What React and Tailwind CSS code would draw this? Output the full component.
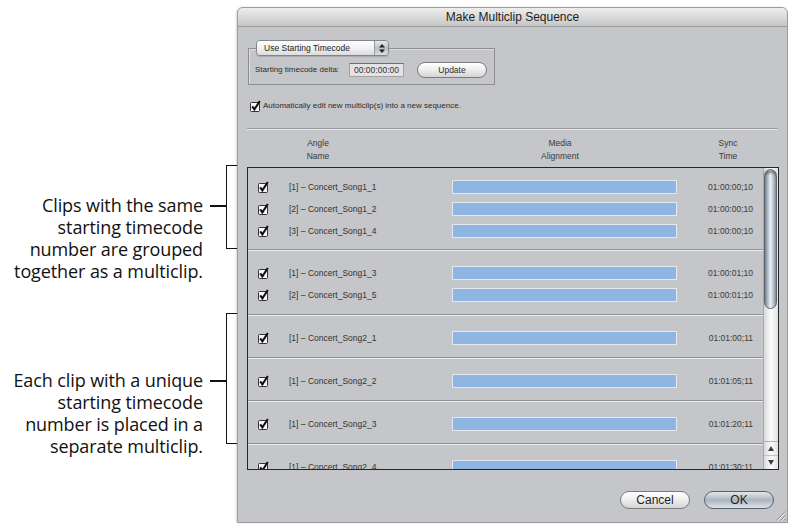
import React from "react";

const groups = [
  [
    ["[1] – Concert_Song1_1", "01:00:00;10"],
    ["[2] – Concert_Song1_2", "01:00:00;10"],
    ["[3] – Concert_Song1_4", "01:00:00;10"],
  ],
  [
    ["[1] – Concert_Song1_3", "01:00:01;10"],
    ["[2] – Concert_Song1_5", "01:00:01;10"],
  ],
  [["[1] – Concert_Song2_1", "01:01:00;11"]],
  [["[1] – Concert_Song2_2", "01:01:05;11"]],
  [["[1] – Concert_Song2_3", "01:01:20;11"]],
  [["[1] – Concert_Song2_4", "01:01:30;11"]],
];

function Check() {
  return (
    <svg width="11" height="12" viewBox="0 0 11 12" className="block shrink-0">
      <rect x="0.5" y="2.5" width="9" height="9" rx="1" fill="#f7f7f7" stroke="#333" />
      <path d="M2.2 6.3 L4.4 9.4 L9.8 1" fill="none" stroke="#0d0d0d" strokeWidth="2" />
    </svg>
  );
}

function Note({ lines, bracket, textTop, dashTop, className = "" }) {
  return (
    <div className={`flex items-start ${className}`} style={{ height: bracket }}>
      <div
        className="w-[203px] text-right font-['Open_Sans',sans-serif] text-[18px] leading-[22px] tracking-[-0.1px] text-[#111]"
        style={{ marginTop: textTop }}
      >
        {lines.map((l, i) => (
          <div key={i} className="whitespace-nowrap">{l}</div>
        ))}
      </div>
      <div className="ml-[7px] w-[16px] h-[1.5px] bg-[#111]" style={{ marginTop: dashTop }} />
      <div className="w-[11px] h-full border-y-[1.5px] border-l-[1.5px] border-[#111]" />
    </div>
  );
}

function ClipRow({ name, tc }) {
  return (
    <div className="flex items-center h-[22px] pl-[10px]">
      <div className="w-[10px]">
        <Check />
      </div>
      <div className="ml-[21px] w-[163px] text-[8.5px] text-[#333] whitespace-nowrap">{name}</div>
      <div className="w-[225px] h-[14px] border border-[#e3e9f0] bg-[#8fb5e3]" />
      <div className="w-[86px] pr-[10px] text-right text-[8.5px] text-[#3a3a3a]">{tc}</div>
    </div>
  );
}

function Group({ rows, first }) {
  return (
    <div
      className={
        first
          ? "pt-[8px] pb-[7px]"
          : "pt-[12px] pb-[8px] border-t border-[#8f9093] shadow-[inset_0_1px_0_#eeeeee]"
      }
    >
      {rows.map(([n, t], i) => (
        <ClipRow key={i} name={n} tc={t} />
      ))}
    </div>
  );
}

function AquaButton({ children, def, className = "" }) {
  return (
    <div
      className={`flex items-center justify-center rounded-full border ${
        def
          ? "border-[#59626c] bg-linear-to-b from-[#e4e8ed] via-[#abb5c0] to-[#dde3e9]"
          : "border-[#7c7c7c] bg-linear-to-b from-[#ffffff] via-[#eeeeee] to-[#d4d4d4]"
      } ${className}`}
    >
      {children}
    </div>
  );
}

export default function App() {
  return (
    <div className="w-[790px] h-[526px] bg-white flex items-start overflow-hidden">
      <div className="w-[237px] shrink-0 pt-[165px]">
        <Note
          lines={["Clips with the same", "starting timecode", "number are grouped", "together as a multiclip."]}
          bracket={84}
          textTop={29}
          dashTop={40}
        />
        <Note
          className="mt-[64px]"
          lines={["Each clip with a unique", "starting timecode", "number is placed in a", "separate multiclip."]}
          bracket={131}
          textTop={56}
          dashTop={67}
        />
      </div>

      <div className="relative mt-[7px] w-[551px] h-[516px] shrink-0 rounded-t-[6px] border border-[#9c9c9c] bg-[#c5c6c9] flex flex-col font-['Liberation_Sans',Arial,sans-serif] text-[#2b2b2b] overflow-hidden shadow-[-1px_0_2px_rgba(0,0,0,0.15)]">
        <div className="h-[19px] shrink-0 border-b border-[#9a9a9a] bg-linear-to-b from-[#ededed] via-[#dadada] to-[#c6c6c6] text-center text-[12px] leading-[18px] text-[#1e1e1e]">
          Make Multiclip Sequence
        </div>

        <div className="relative ml-[10px] mt-[21px] w-[247px] h-[37px] border border-[#8e8e8e] shadow-[inset_1px_1px_0_#dcdcdc]">
          <div className="absolute -top-[9px] left-[7px] flex w-[133px] h-[16px] rounded-[4px] border border-[#858585] overflow-hidden shadow-[0_1px_1px_rgba(0,0,0,0.15)]">
            <div className="flex-1 flex items-center pl-[7px] bg-linear-to-b from-[#ffffff] via-[#f2f2f2] to-[#dcdcdc] text-[8.5px] text-[#222]">
              Use Starting Timecode
            </div>
            <div className="w-[14px] flex items-center justify-center border-l border-[#9a9a9a] bg-linear-to-b from-[#e6eaee] via-[#b8c1ca] to-[#d8dee4]">
              <svg width="6" height="9" viewBox="0 0 6 9">
                <path d="M3 0 L6 3.5 H0Z M3 9 L0 5.5 H6Z" fill="#222" />
              </svg>
            </div>
          </div>
          <div className="flex items-center h-[16px] mt-[13px] pl-[6px]">
            <div className="w-[90px] text-[8px] whitespace-nowrap">Starting timecode delta:</div>
            <div className="ml-[4px] w-[55px] h-[14px] flex items-center justify-center border border-[#a2a2a2] border-t-[#6f6f6f] bg-[#e3e3e3] text-[8.5px] text-[#333]">
              00:00:00:00
            </div>
            <AquaButton className="ml-[13px] w-[70px] h-[16px] text-[8.5px]">Update</AquaButton>
          </div>
        </div>

        <div className="flex items-center h-[14px] mt-[14px] ml-[12px]">
          <Check />
          <div className="ml-[2px] text-[8px] whitespace-nowrap">
            Automatically edit new multiclip(s) into a new sequence.
          </div>
        </div>

        <div className="mt-[15px] mx-[9px] h-[2px] border-t border-[#9a9b9e] bg-[#e4e4e4]" />

        <div className="flex mt-[7px] ml-[10px] text-[8.5px] leading-[13px] text-[#3a3a3a] text-center">
          <div className="w-[140px]">Angle<br />Name</div>
          <div className="ml-[52px] w-[240px]">Media<br />Alignment</div>
          <div className="w-[96px]">Sync<br />Time</div>
        </div>

        <div className="mt-[4px] ml-[9px] w-[532px] h-[303px] shrink-0 border border-[#262626] flex overflow-hidden">
          <div className="w-[515px] flex flex-col">
            {groups.map((g, i) => (
              <Group key={i} rows={g} first={i === 0} />
            ))}
          </div>
          <div className="w-[15px] flex flex-col border-l border-[#a7a7a7] bg-linear-to-r from-[#d9d9d9] via-[#fbfbfb] to-[#e2e2e2]">
            <div className="flex-1 pt-[1px]">
              <div className="w-[13px] h-[140px] rounded-full border border-[#5f6873] bg-linear-to-r from-[#7f8a97] via-[#e8eef4] to-[#8d98a6] shadow-[inset_0_3px_2px_rgba(40,50,60,0.45)]" />
            </div>
            <div className="h-[28px] flex flex-col border-t border-[#b3b3b3]">
              <div className="h-[14px] flex items-center justify-center border-b border-[#c4c4c4]">
                <svg width="6" height="5" viewBox="0 0 6 5"><path d="M3 0 L6 5 H0Z" fill="#3d3d3d" /></svg>
              </div>
              <div className="h-[13px] flex items-center justify-center">
                <svg width="6" height="5" viewBox="0 0 6 5"><path d="M0 0 H6 L3 5Z" fill="#3d3d3d" /></svg>
              </div>
            </div>
          </div>
        </div>

        <div className="flex justify-end gap-[14px] mt-[21px] pr-[13px] text-[12px] text-[#1e1e1e]">
          <AquaButton className="w-[70px] h-[18px]">Cancel</AquaButton>
          <AquaButton def className="w-[70px] h-[18px]">OK</AquaButton>
        </div>

        <svg width="11" height="11" viewBox="0 0 11 11" className="absolute right-[1px] bottom-[1px]">
          <path d="M10.5 1.5 L1.5 10.5 M10.5 5.5 L5.5 10.5 M10.5 9 L9 10.5" stroke="#8a8a8a" strokeWidth="1" />
          <path d="M10.5 2.5 L2.5 10.5 M10.5 6.5 L6.5 10.5" stroke="#f2f2f2" strokeWidth="1" />
        </svg>
      </div>
    </div>
  );
}
